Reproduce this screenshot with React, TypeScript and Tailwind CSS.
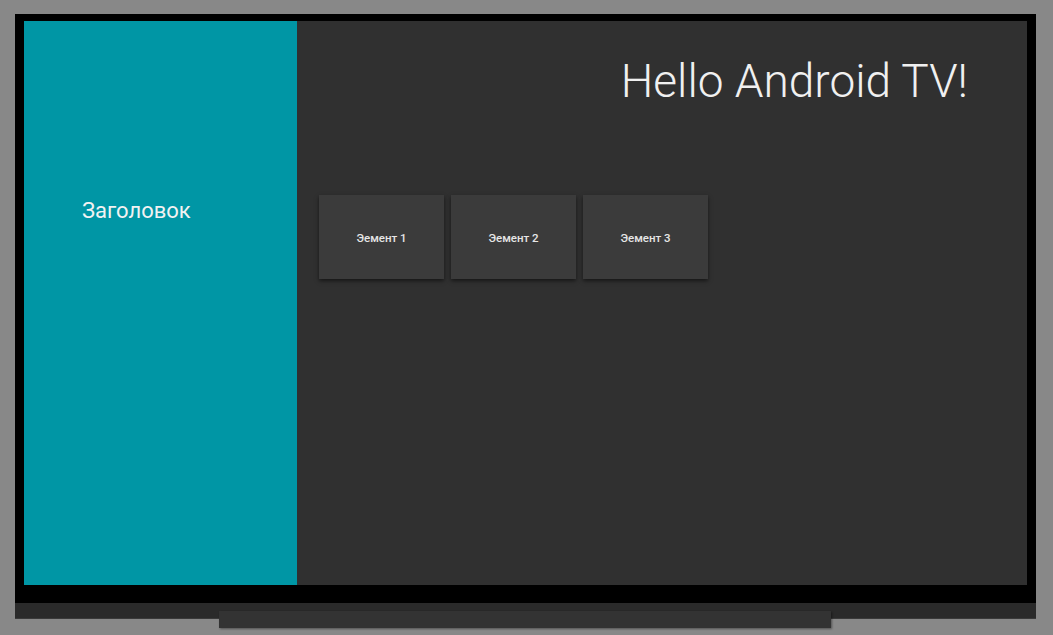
const items = ['Эемент 1', 'Эемент 2', 'Эемент 3'];

const Card = ({ label }: { label: string }) => {
  return (
    <div className="w-[125px] h-[84px] bg-[#3b3b3b] flex items-center justify-center pt-[3px] shadow-[0_2px_4px_rgba(0,0,0,0.55)]">
      <span className="text-[11.5px] font-medium text-[#e6e6e6]">{label}</span>
    </div>
  );
};

const Sidebar = () => {
  return (
    <div className="w-[273px] h-full bg-[#0096a5] shrink-0 pl-[58px] pt-[179px]">
      <h2 className="text-[22px] leading-none text-[#f2f2f2]">Заголовок</h2>
    </div>
  );
};

const Content = () => {
  return (
    <div className="flex-1 h-full bg-[#303030] flex flex-col">
      <h1 className="text-right pr-[59px] pt-[37px] text-[46px] leading-none font-light text-[#f0f0f0]">
        Hello Android TV!
      </h1>
      <div className="flex gap-[7px] pl-[22px] mt-[91px]">
        {items.map((item) => (
          <Card key={item} label={item} />
        ))}
      </div>
    </div>
  );
};

export default function App() {
  return (
    <div
      className="w-[1053px] h-[635px] bg-[#888888] pt-[14px] pl-[15px] overflow-hidden"
      style={{ fontFamily: 'Roboto, "Noto Sans", sans-serif' }}
    >
      <div className="w-[1021px]">
        <div className="bg-black pt-[7px] px-[9px] pb-[18px]">
          <div className="h-[564px] flex">
            <Sidebar />
            <Content />
          </div>
        </div>
        <div className="h-[16px] bg-[#2a2a2a] border-b border-[#3a3a3a]" />
      </div>
      <div className="relative -mt-[8px] ml-[204px] w-[612px] h-[17px] bg-[#333333] shadow-[1px_1px_2px_rgba(0,0,0,0.4)]" />
    </div>
  );
}
